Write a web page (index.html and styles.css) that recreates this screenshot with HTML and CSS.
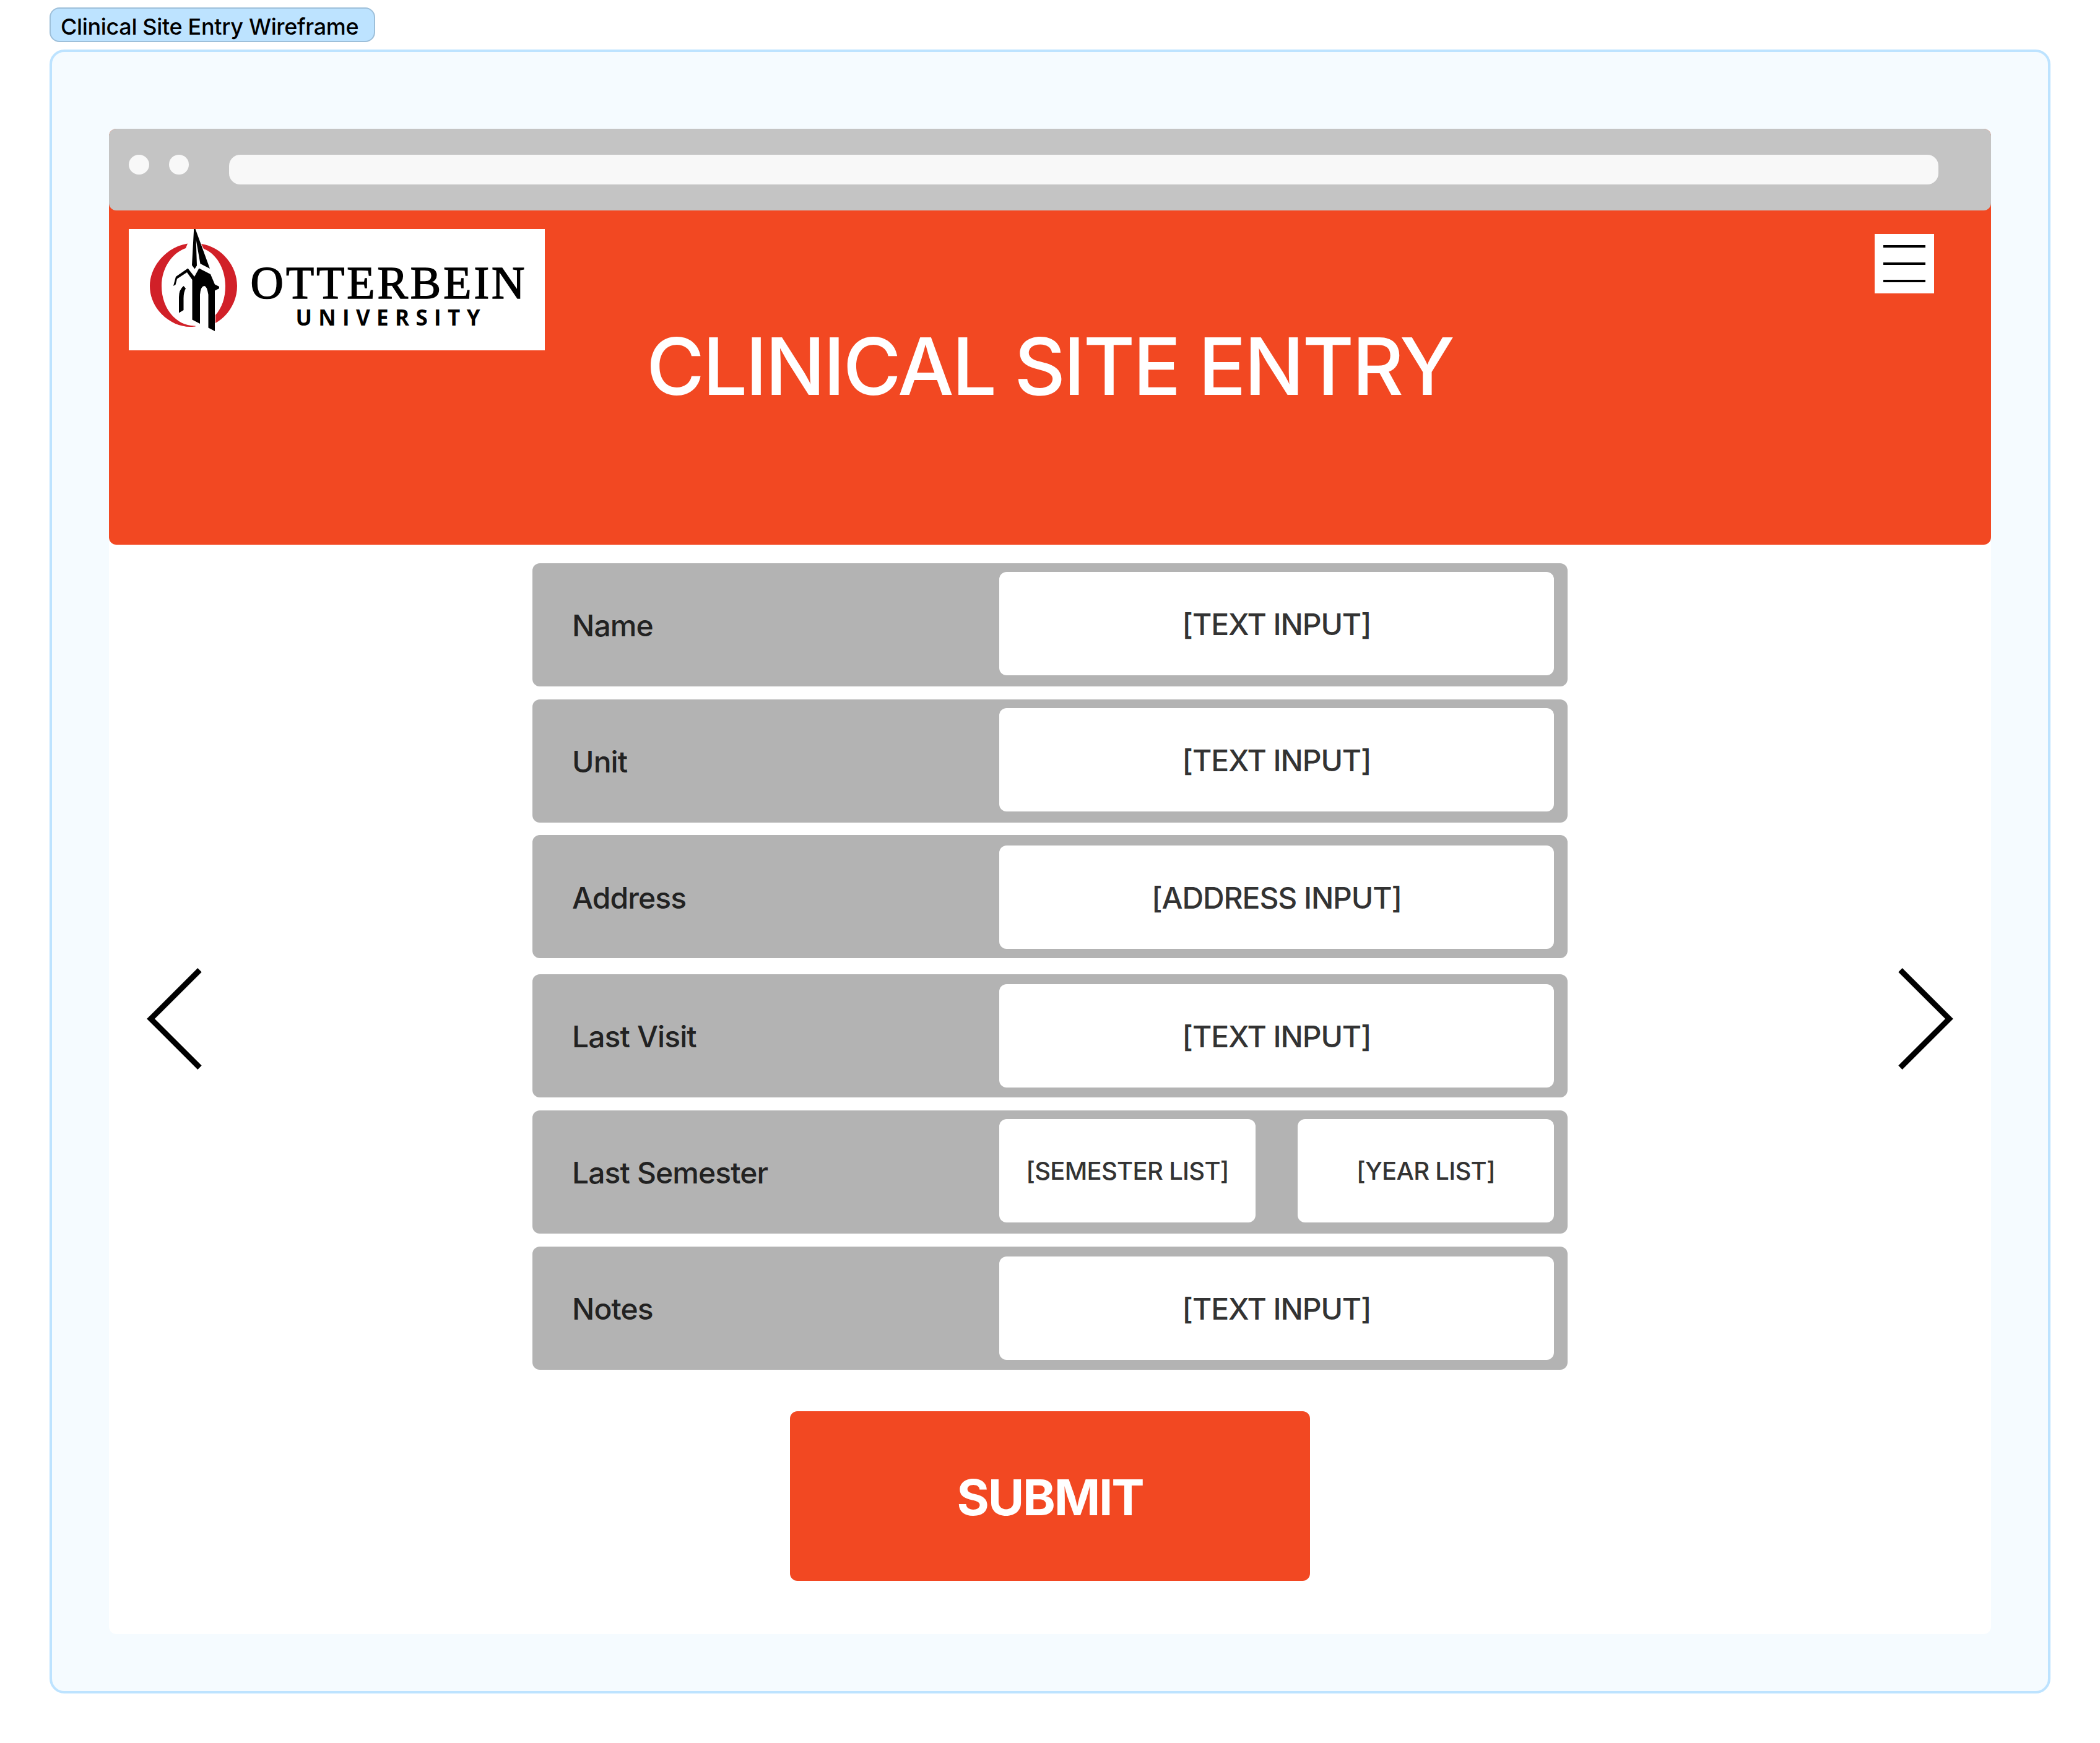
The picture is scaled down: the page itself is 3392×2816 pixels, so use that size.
FILE: index.html
```html
<!DOCTYPE html>
<html lang="en">
<head>
<meta charset="utf-8">
<title>Clinical Site Entry Wireframe</title>
<link rel="stylesheet" href="styles.css">
</head>
<body>
<div class="tag">Clinical Site Entry Wireframe</div>
<main class="board">
  <div class="window">
    <div class="top">
      <div class="chrome"><i class="dot"></i><i class="dot"></i><div class="address"></div></div>
      <header class="banner">
        <svg class="logo" width="672" height="196" viewBox="0 0 672 196" role="img" aria-label="Otterbein University">
          <path fill="#d12028" d="M95 23.500C60 29 34 61 34 92C34 129 67 158 99 158C106 158 112 157 106 156.500C76 156 53 128 53 92C53 62 71 38 92 31Z"/>
          <path fill="#d12028" d="M117 24C151 29 175 60 175 92C175 118 160 141 140 152V139C150 128 156 112 156 92C156 62 140 39 121 32Z"/>
          <path d="M105.200 0H107.600L131 64L115.500 56L108.600 17L110 59L106.500 64.500L102 58.500Z"/>
          <path d="M72 92L76 77L95.500 63.500L106 77L113.500 63.500L132 73L139 89.500L146 93V96L139 99.500V165L128.500 159.500V106Q126 91 121.500 92Q116 93 115 106V153L102.500 146.500V82L94 70L78 80.500L75.500 90Z"/>
          <path d="M88.500 92L92 96Q88.500 102 88.500 112V131L81 135.500V110Q81 98 88.500 92Z"/>
          <g class="logo-name"><text x="196.500" y="111.500" textLength="443">OTTERBEIN</text></g>
          <g class="logo-sub"><text x="269.500" y="155.500" textLength="298">UNIVERSITY</text></g>
        </svg>
        <h1>CLINICAL SITE ENTRY</h1>
        <div class="menu"><i></i><i></i><i></i></div>
      </header>
    </div>
    <div class="content">
      <svg class="arrow" width="86" height="166" viewBox="0 0 86 166"><path d="M85.500 4.200L6.500 83L85.500 161.800"/></svg>
      <form class="form">
        <div class="row"><span class="label">Name</span><span class="input">[TEXT INPUT]</span></div>
        <div class="row"><span class="label">Unit</span><span class="input">[TEXT INPUT]</span></div>
        <div class="row low"><span class="label">Address</span><span class="input">[ADDRESS INPUT]</span></div>
        <div class="row low spaced"><span class="label">Last Visit</span><span class="input">[TEXT INPUT]</span></div>
        <div class="row"><span class="label">Last Semester</span><span class="input half">[SEMESTER LIST]</span><span class="input half">[YEAR LIST]</span></div>
        <div class="row low"><span class="label">Notes</span><span class="input">[TEXT INPUT]</span></div>
        <div class="submit">SUBMIT</div>
      </form>
      <svg class="arrow" width="86" height="166" viewBox="0 0 86 166"><path d="M.5 4.200L79.500 83L.5 161.800"/></svg>
    </div>
  </div>
</main>
</body>
</html>
```

FILE: styles.css
```css
* { box-sizing: border-box; }
body {
  margin: 0;
  padding: 12px 80px 80px;
  background: #fff;
  font-family: Inter, "Liberation Sans", sans-serif;
  font-weight: 500;
}
.tag {
  width: 526px;
  height: 56px;
  padding-left: 16px;
  border: 2px solid #9dbfd9;
  border-radius: 16px;
  background: #bde3ff;
  color: #000;
  font-size: 36px;
  line-height: 58px;
  font-weight: 450;
  letter-spacing: -0.35px;
  white-space: nowrap;
}
.board {
  height: 2656px;
  margin-top: 12px;
  padding: 124px 92px 92px;
  border: 4px solid #bde3ff;
  border-radius: 24px;
  background: #f5fbff;
}
.window { height: 2432px; background: #fff; border-radius: 12px; }
.top { height: 672px; border-radius: 12px; background: #f24822; }
.chrome {
  display: flex;
  align-items: flex-start;
  height: 132px;
  padding: 42px 85px 0 32px;
  border-radius: 12px;
  background: #c4c4c4;
}
.dot { width: 32.500px; height: 32px; margin-right: 32px; border-radius: 50%; background: #f8f8f8; }
.address { flex: 1; height: 48px; margin-left: 33px; border-radius: 18px; background: #f8f8f8; }
.banner {
  display: grid;
  grid-template-columns: 672px 1fr 96px;
  align-items: start;
  padding: 30px 92px 0 32px;
}
.logo { display: block; background: #fff; }
.logo-name { font: 400 74px "Liberation Serif", serif; stroke: #000; stroke-width: 1.500px; }
.logo-sub { font: 700 35px "Open Sans", sans-serif; }
h1 {
  margin: 0;
  padding: 144px 0 0 164px;
  color: #fff;
  font-size: 128px;
  line-height: 156px;
  font-weight: 500;
  letter-spacing: -3px;
  white-space: nowrap;
}
.menu {
  display: flex;
  flex-direction: column;
  gap: 24px;
  height: 96px;
  margin-top: 8px;
  padding: 18px 14px;
  background: #fff;
}
.menu i { height: 4px; background: #000; }
.content { display: flex; justify-content: space-between; padding: 0 61px; }
.arrow { overflow: visible; margin-top: 683px; fill: none; stroke: #000; stroke-width: 9px; }
.form { width: 1672px; padding-top: 30px; }
.row {
  display: flex;
  height: 199px;
  margin-bottom: 20.700px;
  padding: 14px 22px 0 64px;
  border-radius: 12px;
  background: #b3b3b3;
}
.row.low { padding-top: 16.300px; }
.row.spaced { margin-top: 26px; padding-top: 15.600px; }
.label { flex: 1; padding-top: 58px; color: #222; font-size: 48px; line-height: 58px; letter-spacing: -0.900px; }
.row.low .label { padding-top: 56px; }
.input {
  width: 896px;
  height: 167px;
  border-radius: 12px;
  background: #fff;
  color: #333;
  font-size: 48px;
  line-height: 169px;
  letter-spacing: -1.100px;
  text-align: center;
}
.input.half { width: 414px; font-size: 40px; line-height: 168px; letter-spacing: -0.700px; }
.half + .half { margin-left: 68px; }
.submit {
  width: 840px;
  height: 274px;
  margin: 67px auto 0;
  border-radius: 12px;
  background: #f24822;
  color: #fff;
  font-size: 80px;
  line-height: 278px;
  font-weight: 700;
  letter-spacing: -2.200px;
  text-align: center;
}
```
